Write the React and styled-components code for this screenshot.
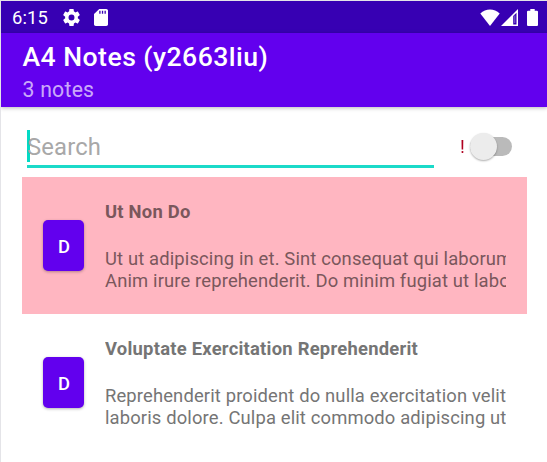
import React from 'react';
import styled, { createGlobalStyle } from 'styled-components';

const GlobalStyle = createGlobalStyle`
  * { box-sizing: border-box; }
  body { margin: 0; background: #fff; font-family: Roboto, "Noto Sans", sans-serif; }
`;

const Screen = styled.div`
  width: 547px;
  height: 462px;
  overflow: hidden;
  background: #fff;
  border-top: 1px solid #e4e4e8;
  border-left: 1px solid #e4e4e8;
`;

const StatusBar = styled.div`
  display: flex;
  align-items: center;
  height: 32px;
  padding: 0 9px 0 11px;
  background: #3700b3;
  color: #fff;
`;

const Clock = styled.span`
  width: 51px;
  font-size: 18.4px;
  line-height: 32px;
  letter-spacing: 0.15px;
  padding-top: 2px;
`;

const StatusIcons = styled.div`
  display: flex;
  align-items: center;
  gap: ${(p) => p.$gap}px;
  margin-left: ${(p) => (p.$end ? 'auto' : '0')};
  svg { display: block; }
`;

const SignalGap = styled.div`
  margin: 0 9px 0 1px;
`;

const AppBar = styled.header`
  height: 74px;
  padding: 8px 0 0 21.5px;
  background: #6200ee;
  color: #fff;
  box-shadow: 0 1px 4px rgba(0, 0, 0, 0.28);
`;

const Title = styled.h1`
  margin: 0;
  font-size: 26.6px;
  font-weight: 500;
  line-height: 32px;
  letter-spacing: 0.46px;
  white-space: nowrap;
`;

const Subtitle = styled.p`
  margin: 0;
  padding-top: 1px;
  font-size: 21.2px;
  line-height: 32px;
  letter-spacing: 0.25px;
  color: rgba(255, 255, 255, 0.68);
`;

const SearchRow = styled.div`
  display: flex;
  height: 70px;
  padding: 23px 15px 0 26px;
`;

const SearchField = styled.div`
  display: flex;
  align-items: flex-start;
  width: 407px;
  height: 38px;
  border-bottom: 3px solid #1bdac9;
`;

const Caret = styled.span`
  width: 3px;
  height: 32px;
  margin-right: -3px;
  background: #03dac5;
`;

const Placeholder = styled.span`
  font-size: 23.8px;
  line-height: 34px;
  letter-spacing: 0.15px;
  color: #a8a8a8;
`;

const Important = styled.span`
  width: 9px;
  margin-left: 26px;
  font-size: 18.6px;
  line-height: 35px;
  color: #b00020;
  will-change: transform;
`;

const Switch = styled.div`
  display: flex;
  align-items: center;
  width: 42px;
  height: 19px;
  margin: 7px 0 0 1px;
  border-radius: 10px;
  background: #bababa;
`;

const Thumb = styled.div`
  flex: none;
  width: 27px;
  height: 27px;
  border-radius: 50%;
  background: #ececec;
  box-shadow: 0 1px 2px rgba(0, 0, 0, 0.32);
`;

const NoteList = styled.main`
  display: flex;
  flex-direction: column;
  padding: 0 20px 0 21px;
`;

const NoteCard = styled.article`
  display: flex;
  align-items: center;
  height: 137px;
  padding: 0 21px;
  background: ${(p) => (p.$important ? '#ffb6c1' : '#fff')};
  color: ${(p) => (p.$important ? '#7a575c' : '#757575')};
`;

const DeleteButton = styled.button`
  flex: none;
  width: 40.4px;
  height: 51px;
  margin-left: 0.3px;
  padding: 3px 0 0 1px;
  border: 0;
  border-radius: 5px;
  background: #6200ee;
  color: #fff;
  font: 500 18.4px/24px Roboto, sans-serif;
  box-shadow: 0 1px 3px rgba(0, 0, 0, 0.3);
`;

const NoteText = styled.div`
  flex: none;
  width: 401px;
  height: 100px;
  margin: 10px 0 0 21.3px;
  overflow: hidden;
  white-space: pre;
`;

const NoteTitle = styled.h2`
  margin: 0 0 25px;
  font-size: 18.4px;
  font-weight: 700;
  line-height: 22px;
  letter-spacing: 0.24px;
`;

const NoteBody = styled.p`
  margin: 0;
  font-size: 18.4px;
  line-height: 22px;
  letter-spacing: 0.145px;
`;

const GearIcon = () => (
  <svg width="17" height="17" viewBox="2 2 20 20" fill="#fff">
    <path d="M19.43 12.98c.04-.32.07-.64.07-.98s-.03-.66-.07-.98l2.11-1.65c.19-.15.24-.42.12-.64l-2-3.46c-.12-.22-.39-.3-.61-.22l-2.49 1c-.52-.4-1.08-.73-1.69-.98l-.38-2.65A.49.49 0 0 0 14 2h-4c-.25 0-.46.18-.49.42l-.38 2.65c-.61.25-1.17.59-1.69.98l-2.49-1c-.23-.09-.49 0-.61.22l-2 3.46c-.13.22-.07.49.12.64l2.11 1.65c-.04.32-.07.65-.07.98s.03.66.07.98l-2.11 1.65c-.19.15-.24.42-.12.64l2 3.46c.12.22.39.3.61.22l2.49-1c.52.4 1.08.73 1.69.98l.38 2.65c.03.24.24.42.49.42h4c.25 0 .46-.18.49-.42l.38-2.65c.61-.25 1.17-.59 1.69-.98l2.49 1c.23.09.49 0 .61-.22l2-3.46c.12-.22.07-.49-.12-.64l-2.11-1.65zM12 15.5a3.5 3.5 0 1 1 0-7 3.5 3.5 0 0 1 0 7z" />
  </svg>
);

const SdCardIcon = () => (
  <svg width="14" height="17" viewBox="4 2 16 20" preserveAspectRatio="none" fill="#fff">
    <path d="M18 2h-8L4.020 8 4 20c0 1.100.9 2 2 2h12c1.100 0 2-.9 2-2V4c0-1.100-.9-2-2-2zm-6.500 5.500h-1.500V4h1.500v3.500zm3 0H13V4h1.500v3.500zm3 0H16V4h1.500v3.500z" />
  </svg>
);

const WifiIcon = () => (
  <svg width="20" height="17" viewBox="0 0 20 17" fill="#fff">
    <path d="M0.300 4.400C5.800-.9 14.200-.9 19.700 4.400L10 17z" />
  </svg>
);

const SignalIcon = () => (
  <svg width="17" height="17" viewBox="0 0 17 17">
    <path d="M0 17L17 0V17z" fill="#fff" />
    <path d="M12.200 7L15.500 3.700V15.500H12.200z" fill="#3700b3" />
    <path d="M13.800 6.500V14" stroke="#8a6bd2" strokeWidth="1" />
  </svg>
);

const BatteryIcon = () => (
  <svg width="11" height="17" viewBox="0 0 11 17" fill="#fff">
    <path d="M3.300 0h4.400v1.700h2.200q1.100 0 1.100 1.100v13.100q0 1.100-1.100 1.100H1.100Q0 17 0 15.900V2.800q0-1.100 1.100-1.100h2.200z" />
  </svg>
);

const notes = [
  {
    title: 'Ut Non Do',
    lines: [
      'Ut ut adipiscing in et. Sint consequat qui laborum',
      'Anim irure reprehenderit. Do minim fugiat ut labo',
    ],
    important: true,
  },
  {
    title: 'Voluptate Exercitation Reprehenderit',
    lines: [
      'Reprehenderit proident do nulla exercitation velit',
      'laboris dolore. Culpa elit commodo adipiscing ut',
    ],
    important: false,
  },
];

export default function App() {
  return (
    <>
      <GlobalStyle />
      <Screen>
        <StatusBar>
          <Clock>6:15</Clock>
          <StatusIcons $gap={14}>
            <GearIcon />
            <SdCardIcon />
          </StatusIcons>
          <StatusIcons $gap={0} $end>
            <WifiIcon />
            <SignalGap><SignalIcon /></SignalGap>
            <BatteryIcon />
          </StatusIcons>
        </StatusBar>
        <AppBar>
          <Title>A4 Notes (y2663liu)</Title>
          <Subtitle>3 notes</Subtitle>
        </AppBar>
        <SearchRow>
          <SearchField>
            <Caret />
            <Placeholder>Search</Placeholder>
          </SearchField>
          <Important>!</Important>
          <Switch role="switch" aria-checked="false">
            <Thumb />
          </Switch>
        </SearchRow>
        <NoteList>
          {notes.map((note) => (
            <NoteCard key={note.title} $important={note.important}>
              <DeleteButton>D</DeleteButton>
              <NoteText>
                <NoteTitle>{note.title}</NoteTitle>
                <NoteBody>{note.lines.join('\n')}</NoteBody>
              </NoteText>
            </NoteCard>
          ))}
        </NoteList>
      </Screen>
    </>
  );
}
